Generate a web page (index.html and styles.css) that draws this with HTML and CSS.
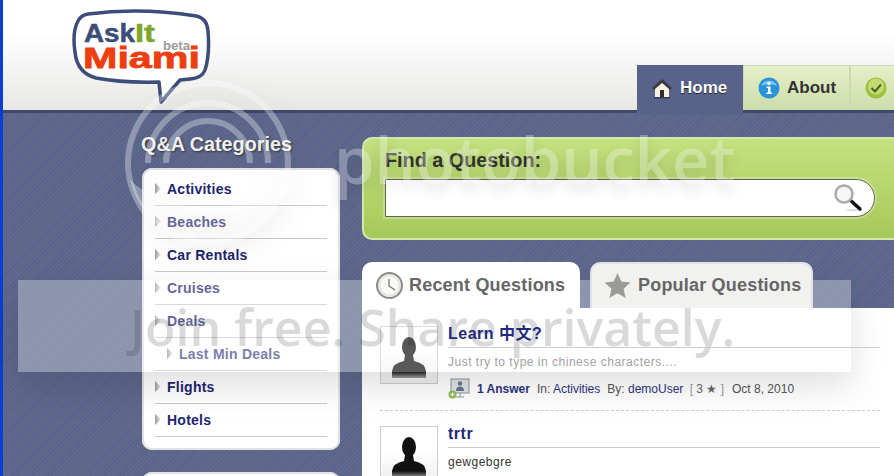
FILE: index.html
```html
<!DOCTYPE html>
<html lang="en">
<head>
    <meta charset="UTF-8">
    <meta name="viewport" content="width=device-width, initial-scale=1.0">
    <title>AskIt Miami</title>
    <link rel="stylesheet" href="styles.css">
</head>
<body>

<div class="page">
    <header class="top">
        <svg class="logo" width="140" height="100" viewBox="0 0 140 100">
            <path d="M16 7 Q68 0 124 9 Q135 11 136 24 Q138 48 133 63 Q130 71 118 72 L108 73 L89 95 L87 75 Q50 76 24 71 Q5 66 3 45 Q0 25 6 14 Q9 8 16 7 Z" fill="#fff" stroke="#3b4d78" stroke-width="3.5" stroke-linejoin="round"/>
            <text x="12" y="35" class="logo-ask" textLength="51" lengthAdjust="spacingAndGlyphs">Ask</text>
            <text x="63" y="35" class="logo-it" textLength="20" lengthAdjust="spacingAndGlyphs">It</text>
            <text x="91" y="43" class="logo-beta" textLength="27" lengthAdjust="spacingAndGlyphs">beta</text>
            <text x="11" y="61" class="logo-miami" textLength="117" lengthAdjust="spacingAndGlyphs">Miami</text>
        </svg>
        <nav class="nav">
            <a class="nav-tab active">
                <svg width="22" height="22" viewBox="0 0 22 22">
                    <path d="M11 2 L21 11 L19 13 L11 6 L3 13 L1 11 Z" fill="#3d3a38"/>
                    <path d="M4 12 L11 6 L18 12 V20 H4 Z" fill="#f4f1e8"/>
                    <rect x="9" y="13" width="4" height="7" fill="#3b2a1c"/>
                    <rect x="3" y="20" width="16" height="1.5" fill="#333c58"/>
                </svg>
                Home
            </a>
            <a class="nav-tab">
                <svg width="22" height="22" viewBox="0 0 22 22">
                    <circle cx="11" cy="11" r="10.5" fill="#2a93d8"/>
                    <path d="M3 9 A8.5 8 0 0 1 19 9 Q11 5 3 9 Z" fill="#7cc6f0"/>
                    <circle cx="11" cy="6.5" r="1.7" fill="#fff"/>
                    <path d="M8.5 9.5 H12.5 V15.5 H14 V17 H8.5 V15.5 H10 V11 H8.5 Z" fill="#fff"/>
                </svg>
                About
            </a>
            <a class="nav-tab">
                <svg width="22" height="22" viewBox="0 0 22 22">
                    <circle cx="11" cy="11" r="10.5" fill="#9cc13c"/>
                    <circle cx="11" cy="9.5" r="8" fill="#c3dc72"/>
                    <path d="M6.5 11 L10 14.5 L16 7.5" fill="none" stroke="#4d5f2a" stroke-width="2"/>
                </svg>
            </a>
        </nav>
    </header>

    <main class="main">
        <aside class="sidebar">
            <h2 class="side-title">Q&amp;A Categories</h2>
            <ul class="cats">
                <li class="cat">Activities</li>
                <li class="cat">Beaches</li>
                <li class="cat">Car Rentals</li>
                <li class="cat">Cruises</li>
                <li class="cat">Deals</li>
                <li class="cat sub">Last Min Deals</li>
                <li class="cat">Flights</li>
                <li class="cat">Hotels</li>
            </ul>
            <div class="next-panel"></div>
        </aside>

        <section class="content">
            <div class="find">
                <label class="find-label">Find a Question:</label>
                <div class="find-box">
                    <svg width="30" height="30" viewBox="0 0 30 30">
                        <ellipse cx="20" cy="27" rx="8" ry="1.2" fill="#ddd"/>
                        <line x1="17" y1="17" x2="27" y2="26" stroke="#111" stroke-width="3.5" stroke-linecap="round"/>
                        <circle cx="11" cy="11" r="8.5" fill="#f6f6f6" stroke="#aaa" stroke-width="2.5"/>
                    </svg>
                </div>
            </div>

            <div class="tabs">
                <div class="tab active">
                    <svg width="27" height="27" viewBox="0 0 27 27">
                        <circle cx="13.5" cy="13.5" r="12.5" fill="#e8e6e0" stroke="#8d8b85" stroke-width="2"/>
                        <circle cx="13.5" cy="13.5" r="9" fill="#fafaf8"/>
                        <path d="M13 7 V14 L19 18" fill="none" stroke="#77756f" stroke-width="1.3"/>
                    </svg>
                    Recent Questions
                </div>
                <div class="tab">
                    <svg width="27" height="27" viewBox="0 0 27 27">
                        <path d="M13.5 1 L17.3 9.6 L26.5 10.6 L19.6 16.8 L21.6 26 L13.5 21.3 L5.4 26 L7.4 16.8 L0.5 10.6 L9.7 9.6 Z" fill="#9a9a96"/>
                    </svg>
                    Popular Questions
                </div>
            </div>

            <div class="questions">
                <article class="question">
                    <div class="avatar">
                        <svg width="48" height="48" viewBox="0 0 48 48">
                            <use href="#person"/>
                        </svg>
                    </div>
                    <div class="q-body">
                        <h3 class="q-title">Learn 中文?</h3>
                        <p class="q-text light">Just try to type in chinese characters....</p>
                        <div class="q-meta">
                            <svg width="22" height="22" viewBox="0 0 22 22">
                                <rect x="3" y="1" width="18" height="14" fill="#dfe3e8" stroke="#8b93a0"/>
                                <circle cx="12" cy="5.5" r="2.2" fill="#65748a"/>
                                <path d="M8 13 Q8 8.5 12 8.5 Q16 8.5 16 13 Z" fill="#65748a"/>
                                <path d="M12 15 V19 M8 19 H16" stroke="#8b93a0"/>
                                <circle cx="4.5" cy="16.5" r="4" fill="#8dbb4a"/>
                                <path d="M4.5 14.5 V18.5 M2.5 16.5 H6.5" stroke="#fff" stroke-width="1.3"/>
                            </svg>
                            <a class="answers">1 Answer</a>
                            <span>In: <a>Activities</a></span>
                            <span>By: <a>demoUser</a> <i class="rep">[ <b>3 ★</b> ]</i></span>
                            <span>Oct 8, 2010</span>
                        </div>
                    </div>
                </article>
                <article class="question">
                    <div class="avatar">
                        <svg width="48" height="48" viewBox="0 0 48 48">
                            <defs>
                                <linearGradient id="fade" x1="0" y1="0" x2="0" y2="1">
                                    <stop offset="0.7" stop-color="#111"/>
                                    <stop offset="1" stop-color="#111" stop-opacity="0.35"/>
                                </linearGradient>
                                <g id="person">
                                    <ellipse cx="24" cy="16" rx="7" ry="10" fill="#111"/>
                                    <path d="M20 24 H28 L29 30 Q40 32 41 40 V47 H7 V40 Q8 32 19 30 Z" fill="url(#fade)"/>
                                </g>
                            </defs>
                            <use href="#person"/>
                        </svg>
                    </div>
                    <div class="q-body">
                        <h3 class="q-title">trtr</h3>
                        <p class="q-text">gewgebgre</p>
                    </div>
                </article>
            </div>
        </section>
    </main>
</div>

<!-- hosting watermark burned into the shot -->
<div class="wm-band"></div>
<svg class="wm-rings" width="180" height="180" viewBox="0 0 180 180">
    <g fill="none" stroke="#fff" stroke-opacity="0.32">
        <circle cx="90" cy="85" r="80" stroke-width="6"/>
        <path d="M30 85 A60 60 0 1 1 150 85" stroke-width="6"/>
        <path d="M48 85 A42 42 0 0 1 132 85" stroke-width="6"/>
    </g>
    <path d="M12 102 A80 80 0 0 0 168 102 A92 58 0 0 1 12 102 Z" fill="#fff" fill-opacity="0.3"/>
</svg>
<div class="wm-brand">photobucket</div>
<div class="wm-slogan">Join free. Share privately.</div>

</body>
</html>
```

FILE: styles.css
```css
html, body {
    margin: 0;
    padding: 0;
    overflow: hidden;
}

body {
    font-family: "Liberation Sans", Arial, sans-serif;
    width: 894px;
    height: 476px;
    position: relative;
}

a {
    color: inherit;
}

.page {
    border-left: 3px solid #0b3fd1;
    height: 476px;
    overflow: hidden;
    background: repeating-linear-gradient(135deg, #58638a 0, #58638a 1px, #5f6a8d 1px, #5f6a8d 3px);
}

/* header */
.top {
    display: flex;
    height: 110px;
    padding-left: 69px;
    border-bottom: 3px solid #3e4868;
    background: linear-gradient(#fff 30%, #e7e7e5 100%);
}

.logo {
    flex-shrink: 0;
    margin-top: 7px;
}

.logo text {
    font-family: "Liberation Sans", Arial, sans-serif;
    font-weight: bold;
}

.logo-ask {
    font-size: 26px;
    fill: #3b4d78;
    stroke: #3b4d78;
    stroke-width: 0.5;
}

.logo-it {
    font-size: 26px;
    fill: #7fa62c;
    stroke: #7fa62c;
    stroke-width: 0.5;
}

.logo-beta {
    font-size: 12px;
    fill: #9a9a9a;
}

.logo-miami {
    font-size: 30px;
    fill: #ee3d0e;
    stroke: #ee3d0e;
    stroke-width: 0.8;
}

.nav {
    display: flex;
    flex-shrink: 0;
    margin: 65px 0 0 425px;
    height: 50px;
    align-items: flex-start;
}

.nav-tab {
    display: flex;
    align-items: center;
    gap: 7px;
    width: 107px;
    height: 45px;
    padding-left: 14px;
    box-sizing: border-box;
    font-size: 17px;
    font-weight: bold;
    color: #333;
    background: linear-gradient(#e6efca, #ccdcaa);
    border: 1px solid #cdd9b2;
    border-bottom: 0;
}

.nav-tab.active {
    width: 106px;
    height: 50px;
    padding-bottom: 5px;
    background: #586389;
    border: 0;
    color: #fff;
    text-shadow: 0 1px 1px #222;
}

/* sidebar */
.main {
    display: flex;
    gap: 22px;
    padding-left: 139px;
}

.sidebar {
    width: 198px;
    flex-shrink: 0;
}

.side-title {
    margin: 20px 0 12px -1px;
    font-size: 19.8px;
    line-height: 23px;
    color: #f2f2f2;
    white-space: nowrap;
    text-shadow: 1px 1px 2px #333;
}

.cats {
    list-style: none;
    margin: 0;
    height: 282px;
    box-sizing: border-box;
    padding: 5px 13px 0 13px;
    background: #fff;
    border-radius: 10px;
    box-shadow: inset 0 0 0 2px #e2e2e2;
}

.cat {
    position: relative;
    height: 33px;
    box-sizing: border-box;
    padding-left: 12px;
    line-height: 33px;
    font-size: 14px;
    font-weight: bold;
    letter-spacing: 0.25px;
    color: #1d2470;
    border-bottom: 1px solid #c9c9c9;
}

.cat::before {
    content: "";
    position: absolute;
    left: 0;
    top: 10px;
    width: 6px;
    height: 11px;
    background: linear-gradient(90deg, #999, #f0f0f0);
    clip-path: polygon(0 0, 100% 50%, 0 100%);
}

.cat.sub {
    padding-left: 24px;
    color: #3f4a8c;
}

.cat.sub::before {
    left: 12px;
}

.next-panel {
    height: 40px;
    margin-top: 22px;
    background: #fff;
    border-radius: 10px;
    box-shadow: inset 0 0 0 2px #e2e2e2;
}

/* right column */
.content {
    width: 540px;
    flex-shrink: 0;
    margin-top: 24px;
}

.find {
    height: 103px;
    box-sizing: border-box;
    padding: 10px 22px 0 21px;
    background: linear-gradient(#c4e280, #a6c85a);
    border: 2px solid #d5e8a8;
    border-radius: 10px;
}

.find-label {
    display: block;
    font-size: 19.8px;
    line-height: 23px;
    font-weight: bold;
    color: #333;
    margin-bottom: 7px;
}

.find-box {
    display: flex;
    align-items: center;
    justify-content: flex-end;
    width: 490px;
    height: 38px;
    box-sizing: border-box;
    padding-right: 11px;
    background: #fff;
    border: 1px solid #5d6650;
    border-radius: 0 19px 19px 0;
    box-shadow: 0 0 0 2px rgba(255, 255, 255, 0.25);
}

.tabs {
    display: flex;
    gap: 10px;
    margin-top: 22px;
    height: 46px;
}

.tab {
    position: relative;
    z-index: 1;
    display: flex;
    align-items: center;
    gap: 6px;
    width: 218px;
    height: 46px;
    box-sizing: border-box;
    padding: 0 0 2px 12px;
    font-size: 18px;
    font-weight: bold;
    letter-spacing: 0.2px;
    color: #666;
    background: #f1f1ef;
    border: 2px solid #dfe2e6;
    border-bottom: 0;
    border-radius: 10px 10px 0 0;
}

.tab + .tab {
    width: 223px;
    gap: 7px;
}

.tab.active {
    background: #fff;
    border-color: #fff;
}

.questions {
    background: #fff;
    height: 168px;
    padding: 0 22px 0 18px;
    overflow: hidden;
}

.question {
    display: flex;
    gap: 10px;
    height: 103px;
    box-sizing: border-box;
    padding-top: 18px;
    border-bottom: 1px dashed #ccc;
}

.question + .question {
    padding-top: 15px;
}

.avatar {
    display: flex;
    align-items: flex-end;
    justify-content: center;
    width: 58px;
    height: 58px;
    box-sizing: border-box;
    flex-shrink: 0;
    padding: 4px;
    border: 1px solid #ccc;
    background: linear-gradient(#fff 40%, #eee);
}

.q-body {
    flex: 1;
}

.q-title {
    position: relative;
    z-index: 1;
    margin: 0;
    height: 21px;
    line-height: 15px;
    font-size: 16px;
    font-weight: bold;
    letter-spacing: 0.5px;
    color: #232a78;
    border-bottom: 1px solid #ccc;
    font-family: "Liberation Sans", "Noto Sans CJK SC", sans-serif;
}

.q-text {
    margin: 7px 0 0;
    font-size: 12px;
    line-height: 14px;
    letter-spacing: 0.5px;
    color: #333;
}

.q-text.light {
    color: #777;
}

.q-meta {
    display: flex;
    align-items: center;
    gap: 7px;
    margin-top: 9px;
    font-size: 12px;
    color: #555;
    white-space: nowrap;
}

.q-meta a {
    color: #2c3580;
}

.q-meta .answers {
    font-weight: bold;
}

.rep {
    font-style: normal;
    color: #999;
    margin-left: 3px;
    margin-right: 1px;
}

.rep b {
    font-weight: normal;
    color: #666;
}

/* watermark */
.wm-band {
    position: absolute;
    left: 18px;
    top: 280px;
    width: 833px;
    height: 92px;
    background: rgba(255, 255, 255, 0.3);
    box-shadow: 0 14px 36px rgba(0, 0, 0, 0.13);
}

.wm-rings {
    position: absolute;
    left: 118px;
    top: 78px;
    filter: drop-shadow(6px 8px 12px rgba(0, 0, 0, 0.15));
}

.wm-brand {
    position: absolute;
    left: 334px;
    top: 110px;
    font-family: "Open Sans", sans-serif;
    font-weight: 600;
    font-size: 65px;
    line-height: 98px;
    white-space: nowrap;
    color: rgba(255, 255, 255, 0.3);
    text-shadow: 0 6px 14px rgba(0, 0, 0, 0.12);
}

.wm-slogan {
    position: absolute;
    left: 130px;
    top: 291px;
    font-family: "Open Sans", sans-serif;
    font-weight: 600;
    font-size: 50px;
    line-height: 72px;
    white-space: nowrap;
    color: rgba(30, 30, 40, 0.17);
}
```
